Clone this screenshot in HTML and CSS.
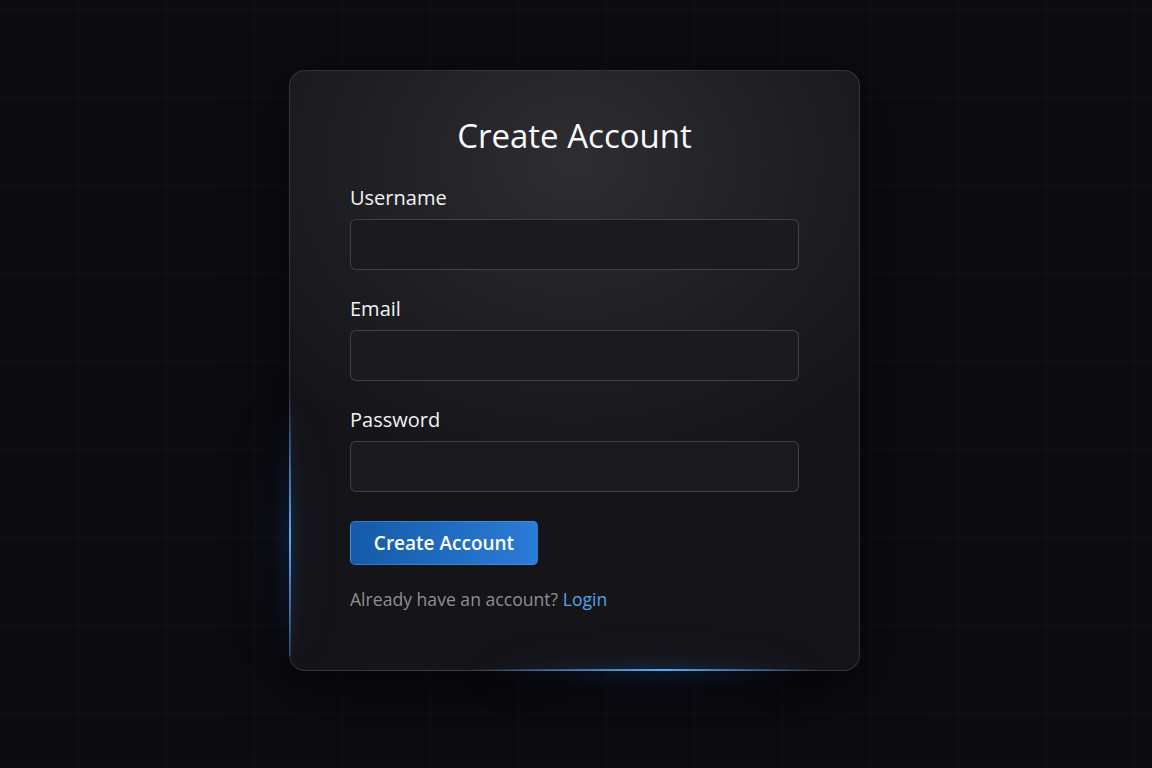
FILE: index.html
```html
<!DOCTYPE html>
<html lang="en">
<head>
	<meta charset="UTF-8">
	<title>Create Account</title>
	<link rel="stylesheet" href="styles.css">
</head>
<body>
	<div class="page">
		<form class="card">
			<h1 class="card-title">Create Account</h1>
			<div class="field">
				<label class="field-label" for="username">Username</label>
				<input class="field-input" type="text" id="username">
			</div>
			<div class="field">
				<label class="field-label" for="email">Email</label>
				<input class="field-input" type="email" id="email">
			</div>
			<div class="field">
				<label class="field-label" for="password">Password</label>
				<input class="field-input" type="password" id="password">
			</div>
			<button class="submit" type="button">Create Account</button>
			<p class="switch">Already have an account? <a class="switch-link" href="#">Login</a></p>
		</form>
	</div>
</body>
</html>
```

FILE: styles.css
```css
html, body{
	margin: 0;
	height: 100%;
}
body{
	font-family: "Open Sans", "Noto Sans", sans-serif;
	color: #f2f2f4;
	background-color: #0c0b10;
	background-image:
		linear-gradient(rgba(255,255,255,.022) 1px, transparent 1px),
		linear-gradient(90deg, rgba(255,255,255,.022) 1px, transparent 1px);
	background-size: 88px 88px;
	background-position: -10px 9px;
}
.page{
	display: flex;
	justify-content: center;
	padding-top: 70px;
	padding-right: 3px;
}
.card{
	width: 449px;
	padding: 45px 60px 59px;
	border-radius: 16px;
	border: 1px solid rgba(255,255,255,.13);
	background: radial-gradient(ellipse 70% 55% at 50% 15%, #2d2d32 0%, #1e1e22 60%, #151418 100%);
	box-shadow: 0 20px 60px rgba(0,0,0,.6);
	position: relative;
}
/* blue edge light */
.card::before{
	content: "";
	position: absolute;
	left: -1px;
	top: 320px;
	bottom: 14px;
	width: 2px;
	background: linear-gradient(rgba(60,140,230,0), rgba(90,170,250,1) 55%, rgba(60,140,230,.25));
	filter: drop-shadow(-2px 0 8px rgba(40,130,240,.9)) drop-shadow(-4px 0 22px rgba(40,120,230,.6));
}
.card::after{
	content: "";
	position: absolute;
	left: 180px;
	right: 40px;
	bottom: -1px;
	height: 2px;
	background: linear-gradient(90deg, rgba(60,140,230,0), rgba(90,170,250,1) 55%, rgba(60,140,230,0));
	filter: drop-shadow(0 2px 8px rgba(40,130,240,.9)) drop-shadow(0 4px 20px rgba(40,120,230,.6));
}
.card-title{
	margin: 0 0 30px;
	font-size: 33px;
	line-height: 40px;
	font-weight: 400;
	text-align: center;
	color: #fafafa;
}
.field{
	display: flex;
	flex-direction: column;
	margin-bottom: 27px;
}
.field-label{
	font-size: 20px;
	line-height: 24px;
	font-weight: 500;
	margin-bottom: 9px;
}
.field-input{
	height: 51px;
	box-sizing: border-box;
	border-radius: 6px;
	border: 1px solid rgba(255,255,255,.17);
	background: #1b1a1f;
	color: #fff;
	outline: none;
	padding: 0 14px;
	font-size: 16px;
}
.submit{
	display: block;
	width: 188px;
	height: 44px;
	margin-top: 29px;
	border: 1px solid rgba(120,180,255,.35);
	border-radius: 5px;
	background: linear-gradient(90deg, #155aa8, #2a7cd8);
	color: #fff;
	font-family: inherit;
	font-size: 19px;
	font-weight: 600;
	cursor: pointer;
}
.switch{
	margin: 22px 0 0;
	font-size: 17.6px;
	line-height: 24px;
	color: #8e8e96;
}
.switch-link{
	color: #4ea6e8;
	text-decoration: none;
}
```
